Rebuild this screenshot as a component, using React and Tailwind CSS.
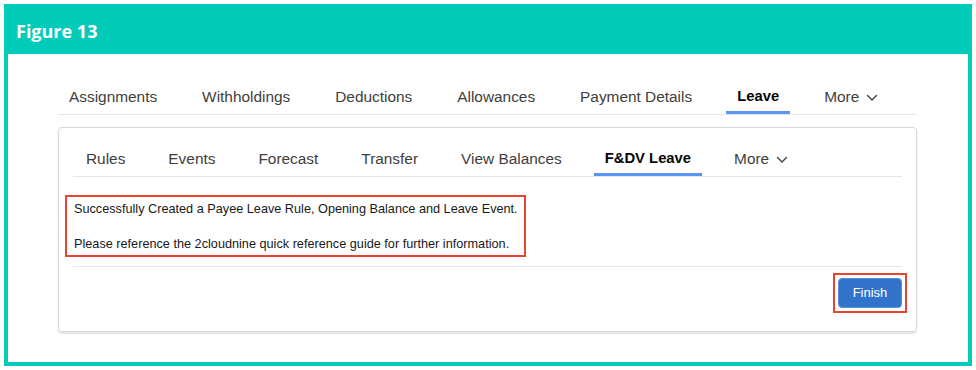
import React from "react";

const Chevron = () => (
  <svg width="12" height="8" viewBox="0 0 12 8" className="ml-[7px] mt-[2px]" fill="none">
    <path d="M1.5 1.5 L6 6 L10.5 1.5" stroke="#3e3e3c" strokeWidth="1.4" strokeLinecap="round" strokeLinejoin="round" />
  </svg>
);

const Tab = ({ label, active, more, h }) => (
  <div
    className={`flex items-center px-[11px] ${h} pt-[4px] border-b-[3px] whitespace-nowrap ${
      active ? "border-[#5b95f0] font-bold text-[#080707] text-[14.8px]" : "border-transparent text-[#3e3e3c]"
    }`}
  >
    <span>{label}</span>
    {more && <Chevron />}
  </div>
);

export default function App() {
  const top = ["Assignments", "Withholdings", "Deductions", "Allowances", "Payment Details"];
  const inner = ["Rules", "Events", "Forecast", "Transfer", "View Balances"];
  return (
    <div
      className="w-[976px] h-[370px] bg-white pt-[4px] pl-[4px]"
      style={{ fontFamily: '"Liberation Sans", Arial, sans-serif' }}
    >
      <div className="w-[968px] h-[362px] border-4 border-[#03cbb9] flex flex-col">
        <div className="h-[46px] bg-[#03cbb9] flex items-center pl-[8px]">
          <span
            className="text-white font-bold text-[18px]"
            style={{ fontFamily: '"Open Sans", sans-serif' }}
          >
            Figure 13
          </span>
        </div>
        <div className="pl-[50px] pt-[24px]">
          <div className="w-[859px] flex gap-[23px] border-b border-[#e5e5e5] text-[15.4px]">
            {top.map((t) => (
              <Tab key={t} label={t} h="h-[36px]" />
            ))}
            <Tab label="Leave" active h="h-[36px]" />
            <Tab label="More" more h="h-[36px]" />
          </div>
          <div className="mt-[12px] w-[859px] border border-[#d8d8d8] rounded-[4px] shadow-[0_2px_2px_rgba(0,0,0,0.12)] px-[14px] pt-[12px] pb-[18px]">
            <div className="flex gap-[21px] border-b border-[#e5e5e5] text-[15.4px] pl-[2px]">
              {inner.map((t) => (
                <Tab key={t} label={t} h="h-[36px]" />
              ))}
              <Tab label="F&DV Leave" active h="h-[36px]" />
              <Tab label="More" more h="h-[36px]" />
            </div>
            <div className="mt-[18px] -ml-[8px] w-[461px] border-2 border-[#e8442f] pl-[7px] pt-[3px] pb-[2px] text-[12.7px] leading-[18px] text-[#181818] whitespace-nowrap">
              <div>Successfully Created a Payee Leave Rule, Opening Balance and Leave Event.</div>
              <div className="mt-[17px]">Please reference the 2cloudnine quick reference guide for further information.</div>
            </div>
            <div className="mt-[9px] border-t border-[#e5e5e5]"></div>
            <div className="flex justify-end mt-[6px] -mr-[5px]">
              <div className="border-2 border-[#e8442f] p-[3px]">
                <button className="w-[64px] h-[30px] bg-[#3274cc] border border-[#5b8fd8] rounded-[4px] text-white text-[13px]">
                  Finish
                </button>
              </div>
            </div>
          </div>
        </div>
      </div>
    </div>
  );
}
